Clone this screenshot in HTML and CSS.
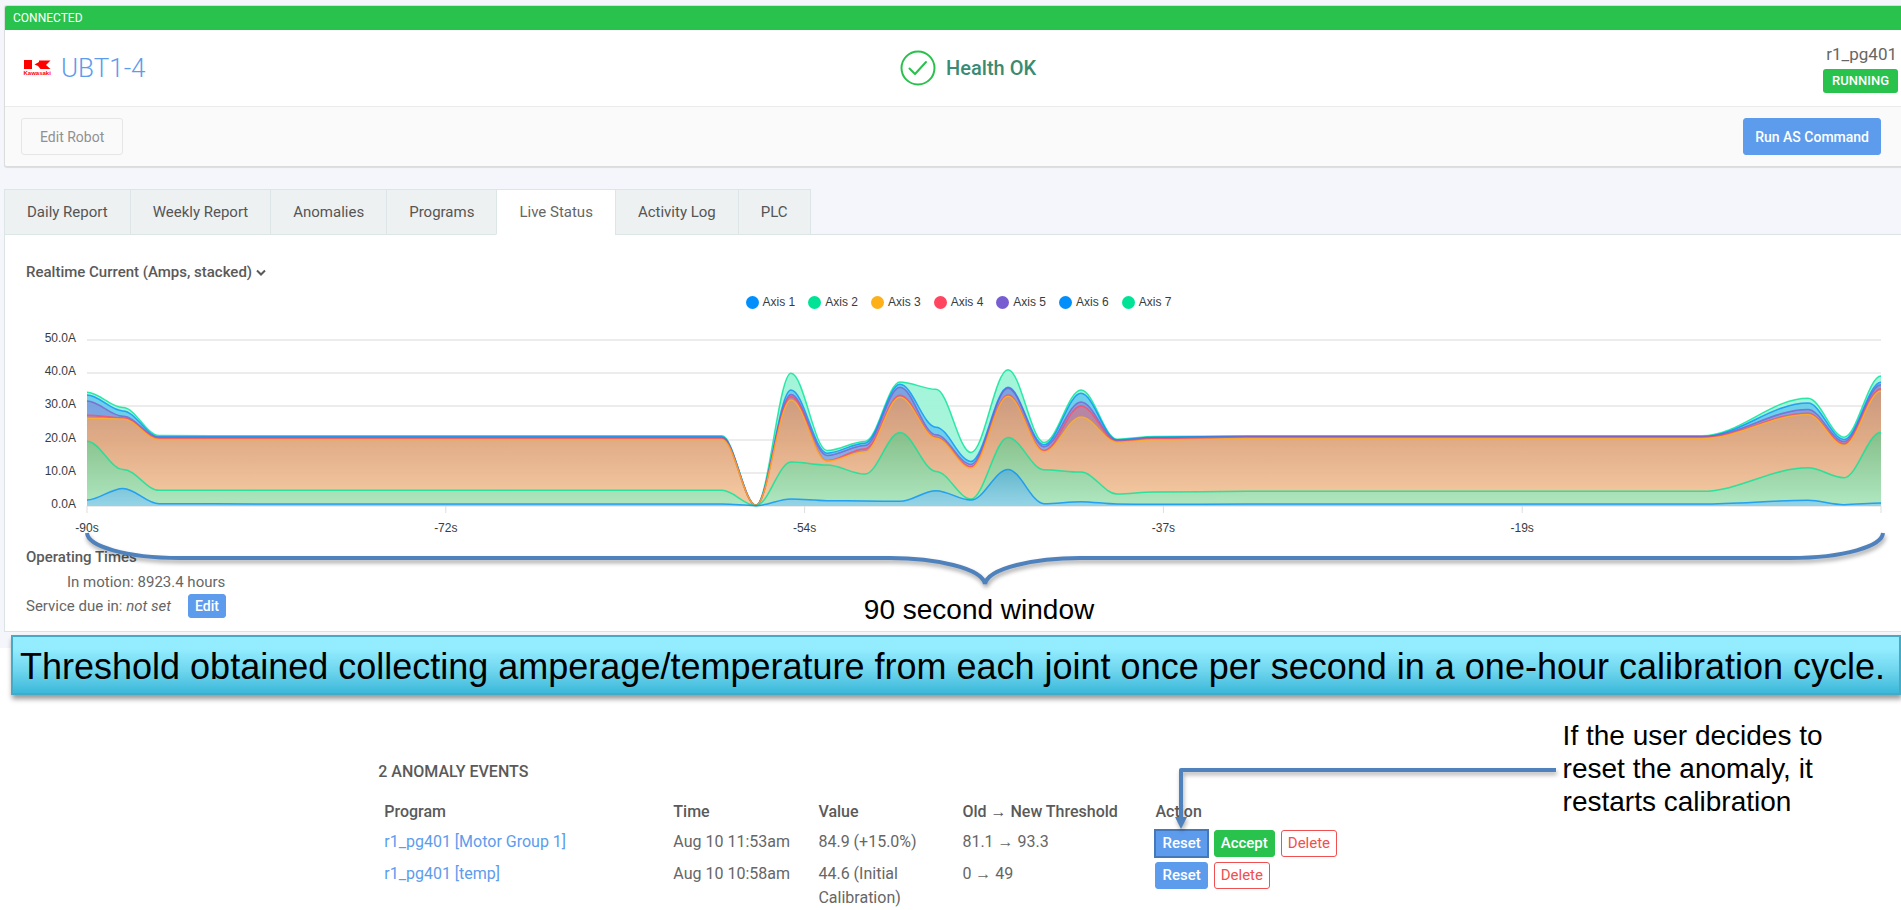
FILE: index.html
```html
<!DOCTYPE html>
<html lang="en">
<head>
<meta charset="utf-8">
<title>UBT1-4 Live Status</title>
<link rel="stylesheet" href="styles.css">
</head>
<body>
<div class="app">
  <section class="card">
    <div class="connection">CONNECTED</div>
    <header class="robot">
      <div class="robot-name">
        <svg class="logo" width="28" height="18" viewBox="0 0 28 18" role="img" aria-label="Kawasaki">
          <path fill="#f00" d="M0 1h8v9H0zM10.500 5.500L15 3V1.500h11.500l-4.500 4.500 4.500 4h-10l-2.500-3z"/>
          <text class="logo-text" x="-0.500" y="16">Kawasaki</text>
        </svg>
        <a class="robot-link" href="#robot">UBT1-4</a>
      </div>
      <div class="health">
        <svg width="36" height="36" viewBox="0 0 36 36" fill="none" stroke="#29c14b" stroke-width="2" stroke-linecap="round" stroke-linejoin="round" aria-hidden="true"><circle cx="18" cy="18" r="16.500"/><path d="M9.500 18.500l5.500 5.500 11-12"/></svg>
        <span>Health OK</span>
      </div>
      <div class="program">
        <span class="program-name">r1_pg401</span>
        <span class="badge">RUNNING</span>
      </div>
    </header>
    <div class="toolbar">
      <button class="btn btn-plain" type="button">Edit Robot</button>
      <button class="btn btn-primary" type="button">Run AS Command</button>
    </div>
  </section>

  <nav class="tabs">
    <a class="tab" href="#daily">Daily Report</a>
    <a class="tab" href="#weekly">Weekly Report</a>
    <a class="tab" href="#anomalies">Anomalies</a>
    <a class="tab" href="#programs">Programs</a>
    <a class="tab tab-active" href="#live" aria-current="page">Live Status</a>
    <a class="tab" href="#activity">Activity Log</a>
    <a class="tab" href="#plc">PLC</a>
  </nav>

  <section class="panel">
    <button class="series-menu" type="button">Realtime Current (Amps, stacked)
      <svg width="10" height="8" viewBox="0 0 10 8" fill="none" stroke="currentColor" stroke-width="2" aria-hidden="true"><path d="M1 1.500l4 4 4-4"/></svg>
    </button>
    <ul class="legend">
      <li class="key blue">Axis 1</li>
      <li class="key green">Axis 2</li>
      <li class="key amber">Axis 3</li>
      <li class="key red">Axis 4</li>
      <li class="key violet">Axis 5</li>
      <li class="key blue">Axis 6</li>
      <li class="key green">Axis 7</li>
    </ul>
    <div class="chart">
      <div class="y-axis"><span>50.0A</span><span>40.0A</span><span>30.0A</span><span>20.0A</span><span>10.0A</span><span>0.0A</span></div>
      <svg class="plot" id="plot" viewBox="0 0 1794 176" preserveAspectRatio="none" role="img" aria-label="Stacked current per axis"></svg>
      <div class="x-axis"><span>-90s</span><span>-72s</span><span>-54s</span><span>-37s</span><span>-19s</span></div>
    </div>
    <h2 class="times-title">Operating Times</h2>
    <div class="motion">In motion: 8923.4 hours</div>
    <div class="service"><span>Service due in: <em>not set</em></span><button class="btn-small blue-fill edit" type="button">Edit</button></div>

    <div class="window-note">
      <svg class="brace" viewBox="0 0 1800 56" preserveAspectRatio="none" aria-hidden="true">
        <path d="M2 1C3 14 40 26 95 26H805C850 26 897 36 900 52C903 36 950 26 995 26H1705C1760 26 1797 14 1798 1"/>
      </svg>
      <p class="note">90 second window</p>
    </div>
  </section>
</div>

<div class="banner">Threshold obtained collecting amperage/temperature from each joint once per second in a one-hour calibration cycle.</div>

<section class="events">
  <h2 class="events-title">2 ANOMALY EVENTS</h2>
  <table class="events-table">
    <colgroup><col class="c-program"><col class="c-time"><col class="c-value"><col class="c-threshold"><col class="c-action"></colgroup>
    <thead><tr><th>Program</th><th>Time</th><th>Value</th><th>Old <span class="to">→</span> New Threshold</th><th>Action</th></tr></thead>
    <tbody>
      <tr>
        <td><a href="#group1">r1_pg401 [Motor Group 1]</a></td><td>Aug 10 11:53am</td><td>84.9 (+15.0%)</td><td>81.1 <span class="to">→</span> 93.3</td>
        <td><div class="actions"><button class="btn-small blue-fill marked" type="button">Reset
          <svg class="arrow" width="380" height="64" viewBox="0 0 380 64" aria-hidden="true"><path d="M380 4H5V52" fill="none" stroke="#4f81bd" stroke-width="4" stroke-linejoin="round"/><path d="M-1 51H11L5 63z" fill="#4f81bd"/></svg></button><button class="btn-small green-fill" type="button">Accept</button><button class="btn-small red-line" type="button">Delete</button></div></td>
      </tr>
      <tr>
        <td><a href="#temp">r1_pg401 [temp]</a></td><td>Aug 10 10:58am</td><td>44.6 (Initial Calibration)</td><td>0 <span class="to">→</span> 49</td>
        <td><div class="actions"><button class="btn-small blue-fill" type="button">Reset</button><button class="btn-small red-line" type="button">Delete</button></div></td>
      </tr>
    </tbody>
  </table>
  <p class="note callout">If the user decides to reset the anomaly, it restarts calibration</p>
</section>
<script src="chart.js"></script>
</body>
</html>
```
FILE: styles.css
```css
* { box-sizing: border-box; }
body { margin: 0; background: #fff; color: #666; font: 15px/24px Roboto, "Liberation Sans", sans-serif; overflow-x: hidden; }
h2, p, ul { margin: 0; padding: 0; }
a { color: #5d9cec; text-decoration: none; }
button { font: inherit; cursor: pointer; }

.app { background: #f5f6fb; padding: 5px 0 16px 4px; }
.card { background: #fff; border: 1px solid #d9dedd; border-right: 0; border-radius: 3px 0 0 3px; box-shadow: 0 1px 1px rgba(0,0,0,.1); overflow: hidden; }
.connection { height: 24px; padding-left: 8px; background: #29c24c; color: #fff; font-size: 12px; line-height: 24px; }
.robot { display: grid; grid-template-columns: 47% auto 1fr; align-items: center; height: 76px; }
.robot-name { display: flex; align-items: center; gap: 9px; padding-left: 19px; }
.logo { overflow: visible; }
.logo-text { font: bold 6px "Liberation Sans", sans-serif; fill: #f00; }
.robot-link { font-size: 26px; font-weight: 300; line-height: 32px; }
.health { display: flex; align-items: center; gap: 10px; padding-left: 4px; color: #3b8a72; font-size: 20px; font-weight: 500; }
.program { display: flex; flex-direction: column; align-items: flex-end; gap: 4px; padding-right: 3px; }
.program-name { font-size: 17px; line-height: 22px; padding-right: 1px; }
.badge { padding: 0 9px; border-radius: 3px; background: #29c24c; color: #fff; font-size: 13px; font-weight: 500; line-height: 24px; }
.toolbar { display: flex; justify-content: space-between; padding: 11px 20px 11px 16px; border-top: 1px solid #eaecec; background: #fafafa; }
.btn { height: 37px; border: 1px solid; border-radius: 3px; font-size: 14px; line-height: 20px; }
.btn-plain { padding: 0 18px; border-color: #e6e6e6; background: #fafafa; color: #909090; }
.btn-primary { padding: 0 11px; border-color: #5d9cec; background: #5d9cec; color: #fff; font-weight: 500; }

.tabs { display: flex; margin-top: 22px; position: relative; z-index: 1; }
.tab { padding: 10px 22px; margin-bottom: -1px; border: 1px solid #dde6e6; border-right-width: 0; background: #edf1f2; color: #555; line-height: 24px; }
.tab:last-child { border-right-width: 1px; }
.tab-active { background: #fff; border-bottom-color: #fff; color: #666; }

.panel { position: relative; padding: 25px 20px 13px 21px; background: #fff; border: 1px solid #dce3e4; border-right: 0; }
.series-menu { display: block; padding: 0; border: 0; background: none; color: #5a5a5a; font-weight: 500; line-height: 24px; }
.legend { display: flex; justify-content: center; gap: 13px; margin-top: 10px; padding-left: 10px; list-style: none; color: #373d3f; font: 12px/16px "Liberation Sans", sans-serif; }
.key { display: flex; align-items: center; gap: 4px; }
.key::before { content: ""; width: 13px; height: 13px; border-radius: 50%; background: var(--c); }
.blue { --c: #008ffb; } .green { --c: #00e396; } .amber { --c: #feb019; } .red { --c: #ff4560; } .violet { --c: #775dd0; }
.chart { display: grid; grid-template-columns: 50px 1fr; column-gap: 11px; margin-top: 29px; color: #373d3f; font: 12px/14px "Liberation Sans", sans-serif; }
.y-axis { display: flex; flex-direction: column; justify-content: space-between; height: 180px; margin-top: -8px; text-align: right; }
.plot { display: block; width: 100%; height: 176px; overflow: visible; }
.plot path { vector-effect: non-scaling-stroke; }
.x-axis { grid-column: 2; display: grid; grid-template-columns: repeat(5, 1fr); margin-top: 6px; }
.x-axis span { width: 40px; margin-left: -20px; text-align: center; }
.times-title { margin-top: 10px; color: #5a5a5a; font-size: 15px; font-weight: 500; line-height: 24px; }
.motion { padding-left: 41px; margin-top: 2px; line-height: 23px; }
.service { display: flex; align-items: center; gap: 17px; line-height: 22px; }
.btn-small { padding: 0 6px; border: 1px solid; border-radius: 3px; font-size: 15px; line-height: 25px; }
.edit { font-size: 14px; line-height: 22px; }
.blue-fill { background: #5d9cec; border-color: #5d9cec; color: #fff; font-weight: 500; }
.green-fill { background: #29c24c; border-color: #29c24c; color: #fff; font-weight: 500; }
.red-line { background: #fff; border-color: #f05050; color: #f05050; }

.note { color: #000; font: 28px/33px "Liberation Sans", sans-serif; }
.window-note { position: absolute; top: 297px; left: 80px; right: 16px; text-align: center; }
.brace { display: block; width: 100%; height: 56px; overflow: visible; filter: drop-shadow(1px 3px 2px rgba(0,0,0,.35)); }
.brace path { fill: none; stroke: #4f81bd; stroke-width: 4; vector-effect: non-scaling-stroke; }
.window-note .note { padding-top: 5px; margin-right: 12px; }

.banner { position: relative; margin: -13px 0 0 11px; padding: 3px 7px 0; border: 2px solid #46aac5; background: linear-gradient(#94edff 20%, #6fd6ee 60%, #3cb8da); box-shadow: 1px 4px 5px rgba(0,0,0,.4); color: #000; font: 36px/53px "Liberation Sans", sans-serif; white-space: nowrap; }

.events { position: relative; padding: 65px 20% 0 19.900%; font-size: 16px; }
.events-title { color: #5a5a5a; font-size: 16px; font-weight: 500; line-height: 24px; }
.events-table { width: 100%; margin-top: 13px; border-collapse: collapse; table-layout: fixed; }
.events-table th { padding: 3px 6px; color: #5a5a5a; font-weight: 500; text-align: left; }
.events-table td { padding: 3px 6px 2px; line-height: 24px; vertical-align: top; }
.to { font-family: "Liberation Sans", sans-serif; font-weight: 400; line-height: 1; }
.c-program { width: 25.300%; } .c-time { width: 12.700%; } .c-value { width: 12.600%; } .c-threshold { width: 16.900%; } .c-action { width: 32.500%; }
.actions { display: flex; gap: 6px; }
.marked { position: relative; border-color: #4478b8; outline: 1px solid #4478b8; border-radius: 0; }
.arrow { position: absolute; left: 20px; bottom: 26px; overflow: visible; filter: drop-shadow(1px 3px 2px rgba(0,0,0,.3)); }
.callout { position: absolute; top: 24px; left: 82.200%; width: 280px; }
```
FILE: chart.js
```javascript
(function () {
  var NS = "http://www.w3.org/2000/svg";
  var svg = document.getElementById("plot");
  var BASE = 167, SCALE = 3.325;
  var lines = ["#008ffb", "#00e396", "#feb019", "#ff4560", "#775dd0", "#008ffb", "#00e396"];
  var fills = [
    [[11, "#5cb3c8"], [0, "#90d2e6"]],
    [[22, "#80bc84"], [0, "#abe6bd"]],
    [[34, "#c79379"], [20, "#dea780"], [3, "#f2c49a"]],
    [[30, "#b37fa0"], [0, "#b37fa0"]],
    [[30, "#739fde"], [0, "#8cb2ea"]],
    [[30, "#66cde8"], [0, "#66cde8"]],
    [[40, "#9df4d7"], [0, "#a8f5dc"]]
  ];
  var calmA = [0.6, 4.7, 20, 20.3, 20.6, 20.8, 21.1];
  var calmB = [0.6, 4.4, 20.3, 20.6, 20.8, 20.9, 21.1];
  // Each sample: x position followed by the cumulative amps of axes 1 to 7.
  var samples = [
    [0, [1.8, 19.5, 26.4, 27.3, 31.6, 33.4, 34.2]],
    [36, [5.3, 11, 26.2, 26.5, 27, 28.6, 29.6]],
    [72, [0.7, 4.7, 20, 20.3, 20.6, 20.8, 21.2]],
    [180, calmA], [360, calmA], [540, calmA], [635, calmA],
    [669, [0.1, 0.1, 0.2, 0.2, 0.2, 0.2, 0.2]],
    [704, [2.1, 13.2, 31.9, 32.9, 33.5, 34.9, 39.9]],
    [740, [1.6, 12.3, 13.5, 13.6, 15.2, 15.9, 16.7]],
    [778, [1.5, 9.6, 16.3, 17.2, 18.2, 18.9, 19.4]],
    [813, [1.4, 22.1, 32.7, 33.3, 35.7, 36.6, 37.3]],
    [849, [4.6, 10.4, 20.4, 20.7, 21.4, 23.7, 35.1]],
    [884, [1.8, 2.1, 11.4, 11.8, 12.5, 13.4, 16.1]],
    [921, [11, 20.6, 33, 33.4, 35.4, 35.7, 41]],
    [957, [0.7, 10.9, 16.3, 16.7, 17.8, 18.4, 19.1]],
    [994, [1.3, 10.2, 26.8, 30.1, 31.3, 33.9, 34.9]],
    [1030, [0.6, 3.6, 19.2, 19.4, 19.7, 19.9, 20.1]],
    [1067, [0.5, 4.2, 19.9, 20.2, 20.5, 20.7, 20.9]],
    [1160, calmB], [1300, calmB], [1440, calmB], [1615, calmB],
    [1721, [1.7, 11.5, 27.5, 27.9, 29, 31, 32.4]],
    [1757, [0.4, 8.5, 18.2, 18.8, 19.4, 20, 20.7]],
    [1794, [0.9, 22.2, 34.6, 35.3, 36.5, 37.2, 39.1]]
  ];

  function add(name, attrs, parent) {
    var el = document.createElementNS(NS, name);
    for (var k in attrs) el.setAttribute(k, attrs[k]);
    (parent || svg).appendChild(el);
    return el;
  }
  function y(amps) { return BASE - amps * SCALE; }
  function curve(level, reversed) {
    var pts = samples.map(function (s) { return [s[0], level < 0 ? BASE : y(s[1][level])]; });
    if (reversed) pts.reverse();
    var d = pts[0].join(" ");
    for (var i = 1; i < pts.length; i++) {
      var a = pts[i - 1], b = pts[i], h = (b[0] - a[0]) * 0.35;
      d += "C" + [a[0] + h, a[1], b[0] - h, b[1], b[0], b[1]].join(" ");
    }
    return d;
  }

  for (var g = 0; g <= 50; g += 10) {
    add("path", { d: "M0 " + Math.round(y(g)) + "H1794", stroke: "#e6e6e6", "stroke-width": 1.5 });
  }
  for (var t = 0; t <= 5; t++) {
    add("path", { d: "M" + t * 358.8 + " 167v7", stroke: "#dddddd", "stroke-width": 1 });
  }
  var defs = add("defs", {});
  fills.forEach(function (stops, i) {
    var top = stops[0][0], bottom = stops[stops.length - 1][0];
    var grad = add("linearGradient", { id: "f" + i, gradientUnits: "userSpaceOnUse", x1: 0, x2: 0, y1: y(top), y2: y(bottom) }, defs);
    stops.forEach(function (s) {
      add("stop", { offset: (top - s[0]) / (top - bottom), "stop-color": s[1] }, grad);
    });
    add("path", { d: "M" + curve(i) + "L" + curve(i - 1, true) + "Z", fill: "url(#f" + i + ")", "fill-opacity": 0.95 });
  });
  for (var n = lines.length - 1; n >= 0; n--) {
    add("path", { d: "M" + curve(n), fill: "none", stroke: lines[n], "stroke-width": 1.5, "stroke-opacity": 0.8 });
  }
})();
```
